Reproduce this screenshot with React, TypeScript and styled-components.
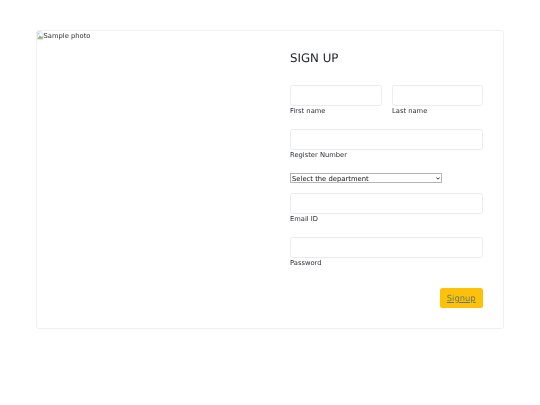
import React from "react";
import styled, { createGlobalStyle } from "styled-components";

const Global = createGlobalStyle`
  html, body { margin: 0; padding: 0; background: #fff; }
  body {
    font-family: "DejaVu Sans", sans-serif;
    color: #2b3035;
    text-rendering: geometricPrecision;
  }
`;

const Page = styled.div`
  width: 540px;
  height: 405px;
  padding: 30px 36px 0;
  box-sizing: border-box;
  filter: blur(0.3px);
`;

const Card = styled.div`
  display: grid;
  grid-template-columns: 253px 1fr;
  width: 468px;
  height: 299px;
  box-sizing: border-box;
  border: 1px solid #eff0f2;
  border-radius: 3px;
  background: #fff;
`;

const Photo = styled.div`
  display: flex;
  align-items: flex-start;
  font-size: 6.75px;
  line-height: 10px;
`;

const Form = styled.form`
  display: flex;
  flex-direction: column;
  padding: 20px 20px 0 0;
`;

const Title = styled.h3`
  margin: 0 0 20px;
  font-size: 11.8px;
  line-height: 14px;
  font-weight: 400;
  color: #212529;
`;

const Row = styled.div`
  display: grid;
  grid-template-columns: 92px 91px;
  column-gap: 10px;
`;

const Field = styled.div<{ $mb?: number }>`
  display: flex;
  flex-direction: column;
  margin-bottom: ${(p) => p.$mb ?? 13}px;
`;

const Input = styled.input`
  display: block;
  width: 100%;
  height: 21px;
  box-sizing: border-box;
  border: 1px solid #eaecee;
  border-radius: 2.5px;
  background: #fff;
  padding: 0 6px;
`;

const Label = styled.label`
  font-size: 6.75px;
  line-height: 10px;
`;

const SelectWrap = styled.div`
  position: relative;
  width: 152px;
  height: 10px;
  margin-bottom: 10px;
`;

const Select = styled.select`
  display: block;
  appearance: none;
  width: 100%;
  height: 100%;
  padding: 1px 0 0 1px;
  box-sizing: border-box;
  font-family: "DejaVu Sans", sans-serif;
  font-size: 6.8px;
  line-height: 8px;
  border: 1px solid #b4b4ba;
  border-radius: 0;
  background: #fff;
  color: #111;
`;

const Chevron = styled.svg`
  position: absolute;
  right: 2px;
  top: 3.5px;
  pointer-events: none;
`;

const Actions = styled.div`
  display: flex;
  justify-content: flex-end;
`;

const Button = styled.a`
  display: flex;
  align-items: center;
  justify-content: center;
  width: 43.5px;
  height: 20px;
  border-radius: 2.5px;
  background: #ffc107;
  color: #5f7a72;
  font-size: 8.4px;
  text-decoration: underline;
`;

const BrokenIcon = () => (
  <svg width="6.5" height="9" viewBox="0 0 7 9" style={{ flex: "none" }}>
    <path d="M0.5 0.5H4.5L6.5 2.5V8.5H0.5Z" fill="#fff" stroke="#b4b8bc" strokeWidth="0.6" />
    <path d="M1 7.5L3 4.5L5 6L6 5V8H1Z" fill="#7fb56c" />
    <circle cx="2" cy="2.5" r="1" fill="#b5d0f0" />
  </svg>
);

export default function App() {
  return (
    <>
      <Global />
      <Page>
        <Card>
          <Photo>
            <BrokenIcon />
            <span>Sample photo</span>
          </Photo>
          <Form onSubmit={(e) => e.preventDefault()}>
            <Title>SIGN UP</Title>
            <Row>
              <Field>
                <Input />
                <Label>First name</Label>
              </Field>
              <Field>
                <Input />
                <Label>Last name</Label>
              </Field>
            </Row>
            <Field>
              <Input />
              <Label>Register Number</Label>
            </Field>
            <SelectWrap>
              <Select defaultValue="">
                <option value="">Select the department</option>
              </Select>
              <Chevron width="4" height="3" viewBox="0 0 4 3">
                <path d="M0.4 0.5L2 2.2L3.6 0.5" fill="none" stroke="#222" strokeWidth="0.9" />
              </Chevron>
            </SelectWrap>
            <Field>
              <Input />
              <Label>Email ID</Label>
            </Field>
            <Field $mb={20}>
              <Input />
              <Label>Password</Label>
            </Field>
            <Actions>
              <Button href="#">Signup</Button>
            </Actions>
          </Form>
        </Card>
      </Page>
    </>
  );
}
